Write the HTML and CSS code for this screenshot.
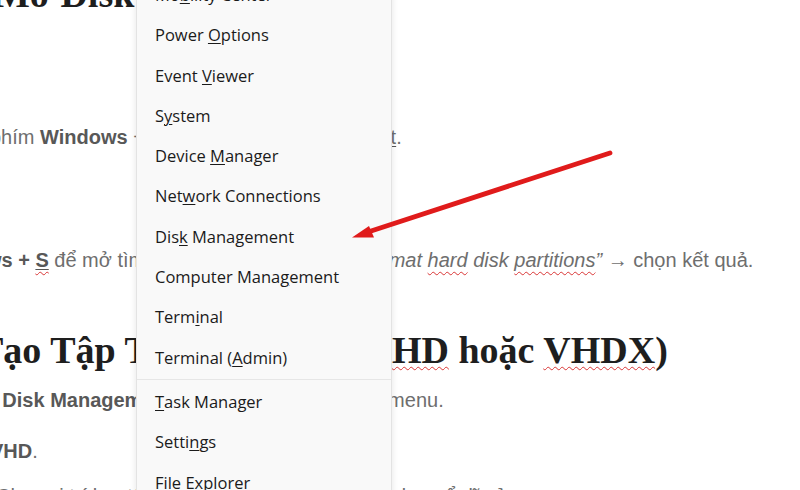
FILE: index.html
```html
<!DOCTYPE html>
<html lang="vi">
<head>
<meta charset="utf-8">
<title>Disk Management</title>
<link rel="stylesheet" href="styles.css">
</head>
<body>
<main class="doc">
  <h2 class="heading heading-top">Mở Disk Management</h2>
  <p class="para para-1">phím <b>Windows</b> + X hoặc chuột phải vào <span class="link">Start</span>.</p>
  <p class="para para-2"><b>Windows + <span class="link"><span class="spell">S</span></span></b> để mở tìm kiếm, nhập <i>“Create and format <span class="spell">hard</span> disk <span class="spell">partitions</span>”</i> → chọn kết quả.</p>
  <h2 class="heading heading-2">Tạo Tập Tin Ổ Đĩa Ảo (<span class="spell">VHD</span> hoặc <span class="spell">VHDX</span>)</h2>
  <p class="para para-3">Mở <b>Disk Management</b>, chọn Action trên thanh menu.</p>
  <p class="para para-4"><b>VHD</b>.</p>
  <p class="para para-5">Chọn vị trí lưu tệp, nhập dung lượng và định dạng ổ đĩa ảo.</p>
</main>

<nav class="menu">
  <div class="menu-item">Mo<u>b</u>ility Center</div>
  <div class="menu-item">Power <u>O</u>ptions</div>
  <div class="menu-item">Event <u>V</u>iewer</div>
  <div class="menu-item">S<u>y</u>stem</div>
  <div class="menu-item">Device <u>M</u>anager</div>
  <div class="menu-item">Net<u>w</u>ork Connections</div>
  <div class="menu-item">Dis<u>k</u> Management</div>
  <div class="menu-item">Computer Mana<u>g</u>ement</div>
  <div class="menu-item">Term<u>i</u>nal</div>
  <div class="menu-item">Terminal (<u>A</u>dmin)</div>
  <div class="menu-sep"></div>
  <div class="menu-item"><u>T</u>ask Manager</div>
  <div class="menu-item">Setti<u>n</u>gs</div>
  <div class="menu-item">File <u>E</u>xplorer</div>
  <div class="menu-item"><u>S</u>earch</div>
</nav>

<svg class="arrow" width="800" height="490" viewBox="0 0 800 490" aria-hidden="true">
  <line x1="610" y1="153" x2="368" y2="232" stroke="#e01b1b" stroke-width="4.8" stroke-linecap="round"/>
  <polygon points="352,237.5 369,226 374,237.5" fill="#e01b1b"/>
</svg>
</body>
</html>
```
FILE: styles.css
```css
html, body {
  margin: 0;
  padding: 0;
}

body {
  width: 800px;
  height: 490px;
  overflow: hidden;
  position: relative;
  background: #ffffff;
  font-family: "Liberation Sans", Arial, sans-serif;
}

.doc {
  display: flow-root;
}

.heading {
  font-family: "Liberation Serif", "Times New Roman", serif;
  font-size: 38px;
  line-height: 46px;
  font-weight: bold;
  color: #1e1e1e;
  margin: 0;
  white-space: nowrap;
}

.para {
  font-size: 20px;
  line-height: 30px;
  color: #6e6e6e;
  margin: 0;
  white-space: nowrap;
}

.para b {
  color: #585858;
}

.heading-top {
  margin-top: -29px;
  margin-left: -6px;
}

.para-1 {
  margin-top: 105px;
  margin-left: -10px;
}

.para-2 {
  margin-top: 93px;
  margin-left: -75px;
}

.heading-2 {
  margin-top: 52px;
  margin-left: -22px;
}

.para-3 {
  margin-top: 12px;
  margin-left: -33px;
}

.para-4 {
  margin-top: 21px;
  margin-left: -10px;
}

.para-5 {
  margin-top: 15px;
  margin-left: -4px;
}

.link {
  text-decoration: underline;
  text-decoration-color: #555;
  text-decoration-thickness: 1px;
  text-underline-offset: 2px;
}

.spell {
  text-decoration: underline wavy #d93535;
  text-decoration-thickness: 1px;
  text-underline-offset: 4px;
  text-decoration-skip-ink: none;
}

.heading .spell {
  text-underline-offset: 3px;
}

.menu {
  position: absolute;
  left: 136px;
  top: -26px;
  width: 254px;
  height: 560px;
  background: #f9f9f9;
  border: 1px solid #e3e3e3;
  box-shadow: 0 0 7px rgba(0, 0, 0, 0.10);
  font-family: "Open Sans", "Noto Sans", sans-serif;
  font-size: 16.5px;
  color: #1b1b1b;
}

.menu-item {
  height: 40.3px;
  line-height: 40.3px;
  padding-left: 18px;
  white-space: nowrap;
}

.menu-item u {
  text-decoration-thickness: 1px;
  text-underline-offset: 2px;
}

.menu-sep {
  height: 1px;
  margin: 1.5px 0;
  background: #e6e6e6;
}

.arrow {
  position: absolute;
  left: 0;
  top: 0;
  pointer-events: none;
}
```
